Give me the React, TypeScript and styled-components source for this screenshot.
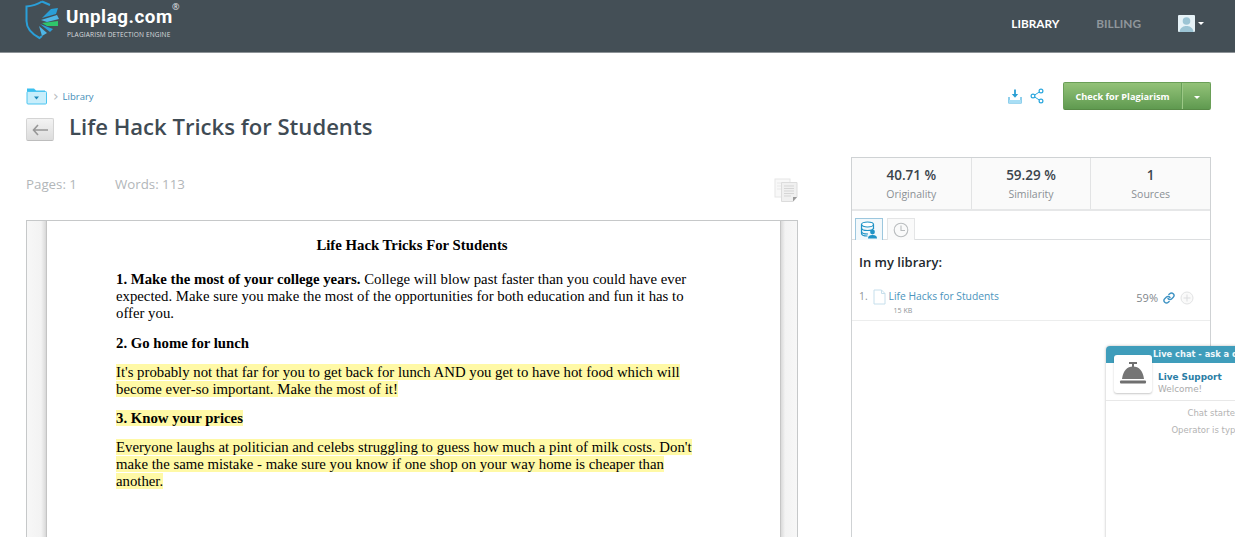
import { FC } from "react";
import styled, { createGlobalStyle } from "styled-components";
import { Link as LinkGlyph } from "lucide-react";

const GlobalStyle = createGlobalStyle`
	html, body {
		margin: 0;
		padding: 0;
		background: #fff;
		overflow: hidden;
	}
	body {
		font-family: "Open Sans", "Liberation Sans", sans-serif;
		color: #3f4b54;
	}
	* {
		box-sizing: border-box;
	}
`;

const Page = styled.div`
	position: relative;
	width: 1235px;
	height: 537px;
	overflow: hidden;
`;

const Header = styled.header`
	height: 53px;
	background: #444f56;
	border-bottom: 1px solid #8d9397;
	display: flex;
	align-items: flex-start;
	padding-left: 25px;
`;

const LogoText = styled.div`
	margin-left: 4px;
	position: relative;
	color: #fff;
`;

const LogoName = styled.div`
	font-family: "Roboto", sans-serif;
	font-size: 18.8px;
	line-height: 22px;
	margin-top: 6px;
	font-weight: 700;
	letter-spacing: 0.55px;
`;

const LogoTag = styled.div`
	font-size: 6.55px;
	line-height: 8px;
	margin-top: 3px;
	margin-left: 1px;
	color: #d8dcde;
	letter-spacing: 0.13px;
	white-space: nowrap;
`;

const Registered = styled.span`
	position: absolute;
	left: 106px;
	top: 1px;
	font-size: 9px;
	line-height: 12px;
	font-weight: 400;
	color: #e4e6e8;
`;

const Nav = styled.nav`
	margin-left: auto;
	display: flex;
	align-items: center;
	height: 46px;
	padding-right: 31px;
`;

const NavLink = styled.a<{ $active?: boolean }>`
	font-family: "Lato", sans-serif;
	font-size: 11.8px;
	font-weight: 700;
	color: ${props => (props.$active ? "#fff" : "#8f969b")};
	margin-right: 37px;
`;

const Avatar = styled.div`
	width: 17px;
	height: 17px;
	background: #e6f2f7;
	overflow: hidden;
	border-radius: 1px;
`;

const Caret = styled.span<{ $color?: string }>`
	display: inline-block;
	width: 0;
	height: 0;
	border-left: 3px solid transparent;
	border-right: 3px solid transparent;
	border-top: 3px solid ${props => props.$color || "#fff"};
`;

const NavCaret = styled(Caret)`
	margin-left: 3px;
`;

const Main = styled.main`
	padding: 29px 24px 0 26px;
`;

const TopRow = styled.div`
	display: flex;
	justify-content: space-between;
	align-items: flex-start;
`;

const Breadcrumb = styled.div`
	display: flex;
	align-items: center;
	height: 20px;
	margin-top: 4px;
	font-size: 9.5px;
	color: #3f8db8;
`;

const Chevron = styled.span`
	color: #b8bcbf;
	font-size: 14px;
	line-height: 14px;
	margin: 0 4px 0 6px;
	font-family: "DejaVu Sans", sans-serif;
`;

const TitleRow = styled.div`
	display: flex;
	align-items: flex-start;
	margin-top: 8px;
`;

const BackButton = styled.button`
	width: 28px;
	height: 23px;
	margin-top: 4px;
	padding: 0;
	border: 1px solid #d4d4d4;
	border-bottom-color: #bdbdbd;
	border-radius: 2px;
	background: linear-gradient(#f3f3f3, #dcdcdc);
	display: flex;
	align-items: center;
	justify-content: center;
`;

const Title = styled.h1`
	margin: -4px 0 0 15px;
	font-size: 22.1px;
	line-height: 32px;
	font-weight: 600;
	color: #3f4b54;
`;

const Actions = styled.div`
	display: flex;
	align-items: center;
	height: 28px;
`;

const IconLink = styled.span`
	display: flex;
	margin-right: 8px;

	&:last-of-type {
		margin-right: 0;
	}
`;

const SplitButton = styled.div`
	display: flex;
	height: 28px;
	margin-left: 19px;
	width: 148px;
	border: 1px solid #6a9f57;
	border-bottom-color: #578a46;
	border-radius: 2px;
	background: linear-gradient(#93c278, #5f9a50);
	color: #fff;
	font-size: 9.2px;
	font-weight: 700;
`;

const ButtonLabel = styled.div`
	width: 118px;
	display: flex;
	align-items: center;
	justify-content: center;
	border-right: 1px solid #68a059;
`;

const ButtonCaret = styled.div`
	flex: 1;
	display: flex;
	align-items: center;
	justify-content: center;
	padding-top: 2px;
	border-left: 1px solid #9cc886;
`;

const Columns = styled.div`
	display: flex;
	align-items: flex-start;
	justify-content: space-between;
`;

const LeftColumn = styled.section`
	width: 772px;
	margin-top: 33px;
`;

const MetaRow = styled.div`
	display: flex;
	justify-content: space-between;
	height: 45px;
	color: #b2b6b9;
	font-size: 13.3px;
`;

const MetaItems = styled.div`
	display: flex;
	gap: 38px;
	line-height: 18px;
`;

const CopyIcon = styled.span`
	display: flex;
	margin-top: 3px;
`;

const DocFrame = styled.div`
	height: 400px;
	border: 1px solid #c6c8c9;
	border-bottom: 0;
	display: flex;
	background: #f6f6f6;
`;

const Gutter = styled.div<{ $side: "left" | "right" }>`
	width: ${props => (props.$side === "left" ? "20px" : "17px")};
	background: linear-gradient(
		${props => (props.$side === "left" ? "to right" : "to left")},
		#f7f7f7 0%,
		#f3f3f3 70%,
		#dcdcdc 92%,
		#b9b9b9 100%
	);
`;

const DocPage = styled.article`
	flex: 1;
	background: #fff;
	padding: 16px 72px 0 69px;
	font-family: "Liberation Serif", "Times New Roman", serif;
	font-size: 14.78px;
	line-height: 17.2px;
	color: #000;
`;

const DocTitle = styled.h2`
	margin: 0 0 17px;
	font-size: 14.78px;
	line-height: 17px;
	font-weight: 700;
	text-align: center;
`;

const DocHeading = styled.h3`
	margin: 0 0 12px;
	font-size: 14.78px;
	line-height: 17px;
	font-weight: 700;
`;

const DocText = styled.p`
	margin: 0 0 12px;
	white-space: nowrap;
`;

const Highlight = styled.mark`
	background: #fff9a6;
	color: inherit;
`;

const SidePanel = styled.aside`
	width: 360px;
	height: 400px;
	margin-top: 15px;
	border: 1px solid #cfd2d4;
	border-bottom: 0;
`;

const Stats = styled.div`
	display: flex;
	height: 53px;
	background: #fafafa;
	border-bottom: 2px solid #e6e7e8;
`;

const Stat = styled.div`
	flex: 1;
	text-align: center;
	padding-top: 8px;
	border-right: 1px solid #e2e3e4;

	&:last-child {
		border-right: 0;
	}
`;

const StatValue = styled.div`
	font-size: 13.5px;
	line-height: 18px;
	font-weight: 600;
	color: #3a444c;
`;

const StatLabel = styled.div`
	font-size: 10.5px;
	line-height: 15px;
	margin-top: 3px;
	color: #8a9095;
`;

const Tabs = styled.div`
	display: flex;
	gap: 4px;
	height: 29px;
	padding: 7px 0 0 3px;
	border-bottom: 1px solid #dcdee0;
`;

const Tab = styled.div<{ $active?: boolean }>`
	width: 28px;
	height: 22px;
	display: flex;
	align-items: center;
	justify-content: center;
	border: 1px solid ${props => (props.$active ? "#9cc7de" : "#e4e5e6")};
	border-bottom: 0;
	background: ${props => (props.$active ? "#f2f8fb" : "#fafafa")};
`;

const LibraryTitle = styled.h4`
	margin: 13px 0 0 7px;
	font-size: 13px;
	line-height: 18px;
	font-weight: 600;
	color: #23292e;
`;

const SourceRow = styled.div`
	display: flex;
	align-items: flex-start;
	height: 32px;
	margin-top: 18px;
	padding: 0 16px 0 7px;
	border-bottom: 1px solid #eceded;
	font-size: 10.3px;
	line-height: 15px;
`;

const SourceIndex = styled.span`
	color: #8d9397;
	margin-right: 5px;
`;

const SourceBody = styled.div`
	margin-left: 3px;
`;

const SourceName = styled.a`
	display: block;
	color: #4b94bd;
`;

const SourceSize = styled.div`
	margin: 2px 0 0 5px;
	font-size: 7px;
	line-height: 10px;
	color: #8d9397;
`;

const SourceRight = styled.div`
	margin-left: auto;
	display: flex;
	align-items: center;
	gap: 5px;
	height: 15px;
	margin-top: 1px;
	font-size: 11px;
	color: #7f868b;
`;

const ChatWidget = styled.div`
	position: absolute;
	left: 1106px;
	top: 346px;
	width: 216px;
	height: 220px;
	background: #fff;
	border-radius: 4px 4px 0 0;
	box-shadow: 0 0 3px rgba(0, 0, 0, 0.28);
	font-family: "DejaVu Sans", sans-serif;
	overflow: hidden;
`;

const ChatBar = styled.div`
	height: 17px;
	background: #3f9dbb;
	color: #eef7fa;
	font-size: 8.3px;
	font-weight: 700;
	line-height: 17px;
	padding-left: 47px;
	white-space: nowrap;
`;

const ChatHead = styled.div`
	display: flex;
	height: 38px;
	padding-left: 8px;
	border-bottom: 1px solid #e8e8e8;
`;

const BellBox = styled.div`
	width: 38px;
	height: 38px;
	margin-top: -8px;
	background: #fff;
	border-radius: 3px;
	box-shadow: 0 1px 2px rgba(0, 0, 0, 0.22);
	display: flex;
	align-items: center;
	justify-content: center;
`;

const ChatIdentity = styled.div`
	margin-left: 6px;
	padding-top: 8px;
	font-size: 8.9px;
	line-height: 12px;
`;

const ChatName = styled.div`
	font-weight: 700;
	color: #2b7ea6;
`;

const ChatStatus = styled.div`
	color: #ababab;
`;

const ChatLine = styled.div`
	text-align: center;
	font-size: 8.5px;
	line-height: 10px;
	margin-top: 7px;
	color: #b3b3b3;

	&:first-of-type {
		margin-top: 8px;
	}
`;

const ShieldLogo: FC = () => (
	<svg width="37" height="40" viewBox="0 0 37 40">
		<path
			d="M17 1.5 C13 4 7 6 1.5 6.5 L1.5 21 C1.5 29 8 34.5 14.5 38 L17 36"
			fill="none"
			stroke="#2a9fd8"
			strokeWidth="2"
		/>
		<path d="M17 1.5 L25 5" fill="none" stroke="#2a9fd8" strokeWidth="2" />
		<path d="M17 18 L26 9 L33 8 L31 14 Z" fill="#2a9fd8" />
		<path d="M16 20 L32 15 L34 19 L22 22 Z" fill="#4fb6e6" />
		<path d="M17 23 L33 21 L33 26 L22 26 Z" fill="#2fc56b" />
		<path d="M15 24 L28 29 L25 32 Z" fill="#2a9fd8" />
		<path d="M14 26 L22 33 L17 36 Z" fill="#4fb6e6" />
	</svg>
);

const AvatarIcon: FC = () => (
	<svg width="17" height="17" viewBox="0 0 17 17">
		<circle cx="8.5" cy="6" r="3.8" fill="#9cc4d4" />
		<path d="M1.5 17 C2 12 6 11 8.5 11 C11 11 15 12 15.5 17 Z" fill="#9cc4d4" />
	</svg>
);

const FolderIcon: FC = () => (
	<svg width="21" height="18" viewBox="0 0 21 18">
		<path d="M1 3 L1 1.5 L8 1.5 L10 3.5 L19 3.5 L19 5 L1 5 Z" fill="#3cc0ef" />
		<rect x="1" y="4.5" width="19.5" height="12.5" rx="1" fill="#c8eefb" stroke="#4cc5f0" />
		<path d="M8 9.5 L13 9.5 L10.5 12.5 Z" fill="#1b87b8" />
	</svg>
);

const BackArrow: FC = () => (
	<svg width="16" height="12" viewBox="0 0 16 12">
		<path d="M6 1 L1.5 6 L6 11 M1.5 6 L16 6" fill="none" stroke="#979797" strokeWidth="1.6" />
	</svg>
);

const DownloadIcon: FC = () => (
	<svg width="14" height="15" viewBox="0 0 14 15">
		<path d="M7 0.5 L7 7" stroke="#2b9fd4" strokeWidth="1.8" />
		<path d="M3.8 5 L7 8.8 L10.2 5 Z" fill="#2b9fd4" />
		<path d="M1 8 L1 14 L13 14 L13 8" fill="none" stroke="#45b0e0" strokeWidth="1.2" />
		<rect x="1" y="11" width="12" height="3" fill="#a8def5" />
	</svg>
);

const ShareIcon: FC = () => (
	<svg width="14" height="16" viewBox="0 0 14 16">
		<path d="M11 3 L3 8 L11 13" fill="none" stroke="#2ba7de" strokeWidth="1" />
		<circle cx="11" cy="3" r="1.9" fill="#fff" stroke="#2ba7de" strokeWidth="1.2" />
		<circle cx="3" cy="8" r="1.9" fill="#fff" stroke="#2ba7de" strokeWidth="1.2" />
		<circle cx="11" cy="13" r="1.9" fill="#fff" stroke="#2ba7de" strokeWidth="1.2" />
	</svg>
);

const PagesIcon: FC = () => (
	<svg width="24" height="24" viewBox="0 0 24 24">
		<rect x="1" y="1" width="15" height="18" fill="#f8f8f8" stroke="#e6e6e6" />
		<path d="M3 5 H13 M3 8 H13 M3 11 H13" stroke="#e8e8e8" />
		<path d="M7.5 4.5 H23 V19 L19 23.5 H7.5 Z" fill="#f0f0f0" stroke="#dcdcdc" />
		<path d="M10 8 H20 M10 10.5 H20 M10 13 H20 M10 15.5 H20 M10 18 H17" stroke="#d5d5d5" />
		<path d="M23 19 L19 19 L19 23.5 Z" fill="#9a9a9a" />
	</svg>
);

const DatabaseIcon: FC = () => (
	<svg width="18" height="18" viewBox="0 0 18 18">
		<ellipse cx="7.5" cy="3.5" rx="6" ry="2.5" fill="#fff" stroke="#1f93c6" strokeWidth="1.2" />
		<path d="M1.5 3.5 V12.5 C1.5 14 4 15 7.5 15 M13.5 3.5 V8" fill="none" stroke="#1f93c6" strokeWidth="1.2" />
		<path d="M1.5 7 C1.5 8.5 4 9.5 7.5 9.5 C11 9.5 13.5 8.5 13.5 7 M1.5 10.5 C1.5 12 4 13 8 13" fill="none" stroke="#1f93c6" strokeWidth="1.2" />
		<circle cx="12.5" cy="11" r="2.4" fill="#1f93c6" />
		<path d="M8 17.5 C8 14.5 10.5 14 12.5 14 C14.5 14 17 14.5 17 17.5 Z" fill="#1f93c6" />
	</svg>
);

const ClockIcon: FC = () => (
	<svg width="16" height="16" viewBox="0 0 16 16">
		<circle cx="8" cy="8" r="6.8" fill="none" stroke="#b9bcbe" strokeWidth="1.1" />
		<path d="M8 3.5 V8.5 H12" fill="none" stroke="#b9bcbe" strokeWidth="1.1" />
	</svg>
);

const FileIcon: FC = () => (
	<svg width="13" height="16" viewBox="0 0 13 16">
		<path d="M1 1 H8.5 L12 4.5 V15 H1 Z" fill="#fff" stroke="#c6dfec" />
		<path d="M8.5 1 V4.5 H12" fill="none" stroke="#c6dfec" />
	</svg>
);

const PlusIcon: FC = () => (
	<svg width="14" height="14" viewBox="0 0 14 14">
		<circle cx="7" cy="7" r="6" fill="#fafafa" stroke="#e2e3e4" />
		<path d="M7 3.5 V10.5 M3.5 7 H10.5" stroke="#dcdddf" />
	</svg>
);

const BellIcon: FC = () => (
	<svg width="28" height="26" viewBox="0 0 28 26">
		<rect x="10" y="1" width="8" height="2" fill="#6f6f6f" />
		<rect x="13" y="2" width="2" height="4" fill="#6f6f6f" />
		<path d="M3 18 C4 10 8 5.5 14 5.5 C20 5.5 24 10 25 18 Z" fill="#757575" />
		<rect x="1" y="19.5" width="26" height="3" rx="1" fill="#6f6f6f" />
	</svg>
);

const App: FC = () => {
	return (
		<Page>
			<GlobalStyle />
			<Header>
				<ShieldLogo />
				<LogoText>
					<LogoName>Unplag.com</LogoName>
					<LogoTag>PLAGIARISM DETECTION ENGINE</LogoTag>
					<Registered>®</Registered>
				</LogoText>
				<Nav>
					<NavLink $active>LIBRARY</NavLink>
					<NavLink>BILLING</NavLink>
					<Avatar>
						<AvatarIcon />
					</Avatar>
					<NavCaret />
				</Nav>
			</Header>

			<Main>
				<TopRow>
					<div>
						<Breadcrumb>
							<FolderIcon />
							<Chevron>›</Chevron>
							Library
						</Breadcrumb>
						<TitleRow>
							<BackButton>
								<BackArrow />
							</BackButton>
							<Title>Life Hack Tricks for Students</Title>
						</TitleRow>
					</div>
					<Actions>
						<IconLink>
							<DownloadIcon />
						</IconLink>
						<IconLink>
							<ShareIcon />
						</IconLink>
						<SplitButton>
							<ButtonLabel>Check for Plagiarism</ButtonLabel>
							<ButtonCaret>
								<Caret />
							</ButtonCaret>
						</SplitButton>
					</Actions>
				</TopRow>

				<Columns>
					<LeftColumn>
						<MetaRow>
							<MetaItems>
								<span>Pages: 1</span>
								<span>Words: 113</span>
							</MetaItems>
							<CopyIcon>
								<PagesIcon />
							</CopyIcon>
						</MetaRow>
						<DocFrame>
							<Gutter $side="left" />
							<DocPage>
								<DocTitle>Life Hack Tricks For Students</DocTitle>
								<DocText>
									<b>1. Make the most of your college years.</b> College will blow past faster than you could have ever
									<br />
									expected. Make sure you make the most of the opportunities for both education and fun it has to
									<br />
									offer you.
								</DocText>
								<DocHeading>2. Go home for lunch</DocHeading>
								<DocText>
									<Highlight>It's probably not that far for you to get back for lunch AND you get to have hot food which will</Highlight>
									<br />
									<Highlight>become ever-so important. Make the most of it!</Highlight>
								</DocText>
								<DocHeading>
									<Highlight>3. Know your prices</Highlight>
								</DocHeading>
								<DocText>
									<Highlight>Everyone laughs at politician and celebs struggling to guess how much a pint of milk costs. Don't</Highlight>
									<br />
									<Highlight>make the same mistake - make sure you know if one shop on your way home is cheaper than</Highlight>
									<br />
									<Highlight>another.</Highlight>
								</DocText>
							</DocPage>
							<Gutter $side="right" />
						</DocFrame>
					</LeftColumn>

					<SidePanel>
						<Stats>
							<Stat>
								<StatValue>40.71 %</StatValue>
								<StatLabel>Originality</StatLabel>
							</Stat>
							<Stat>
								<StatValue>59.29 %</StatValue>
								<StatLabel>Similarity</StatLabel>
							</Stat>
							<Stat>
								<StatValue>1</StatValue>
								<StatLabel>Sources</StatLabel>
							</Stat>
						</Stats>
						<Tabs>
							<Tab $active>
								<DatabaseIcon />
							</Tab>
							<Tab>
								<ClockIcon />
							</Tab>
						</Tabs>
						<LibraryTitle>In my library:</LibraryTitle>
						<SourceRow>
							<SourceIndex>1.</SourceIndex>
							<FileIcon />
							<SourceBody>
								<SourceName>Life Hacks for Students</SourceName>
								<SourceSize>15 KB</SourceSize>
							</SourceBody>
							<SourceRight>
								<span>59%</span>
								<LinkGlyph size={12} color="#3f93c4" strokeWidth={2.8} />
								<PlusIcon />
							</SourceRight>
						</SourceRow>
					</SidePanel>
				</Columns>
			</Main>

			<ChatWidget>
				<ChatBar>Live chat - ask a question</ChatBar>
				<ChatHead>
					<BellBox>
						<BellIcon />
					</BellBox>
					<ChatIdentity>
						<ChatName>Live Support</ChatName>
						<ChatStatus>Welcome!</ChatStatus>
					</ChatIdentity>
				</ChatHead>
				<ChatLine>Chat started</ChatLine>
				<ChatLine>Operator is typing...</ChatLine>
			</ChatWidget>
		</Page>
	);
};

export default App;
